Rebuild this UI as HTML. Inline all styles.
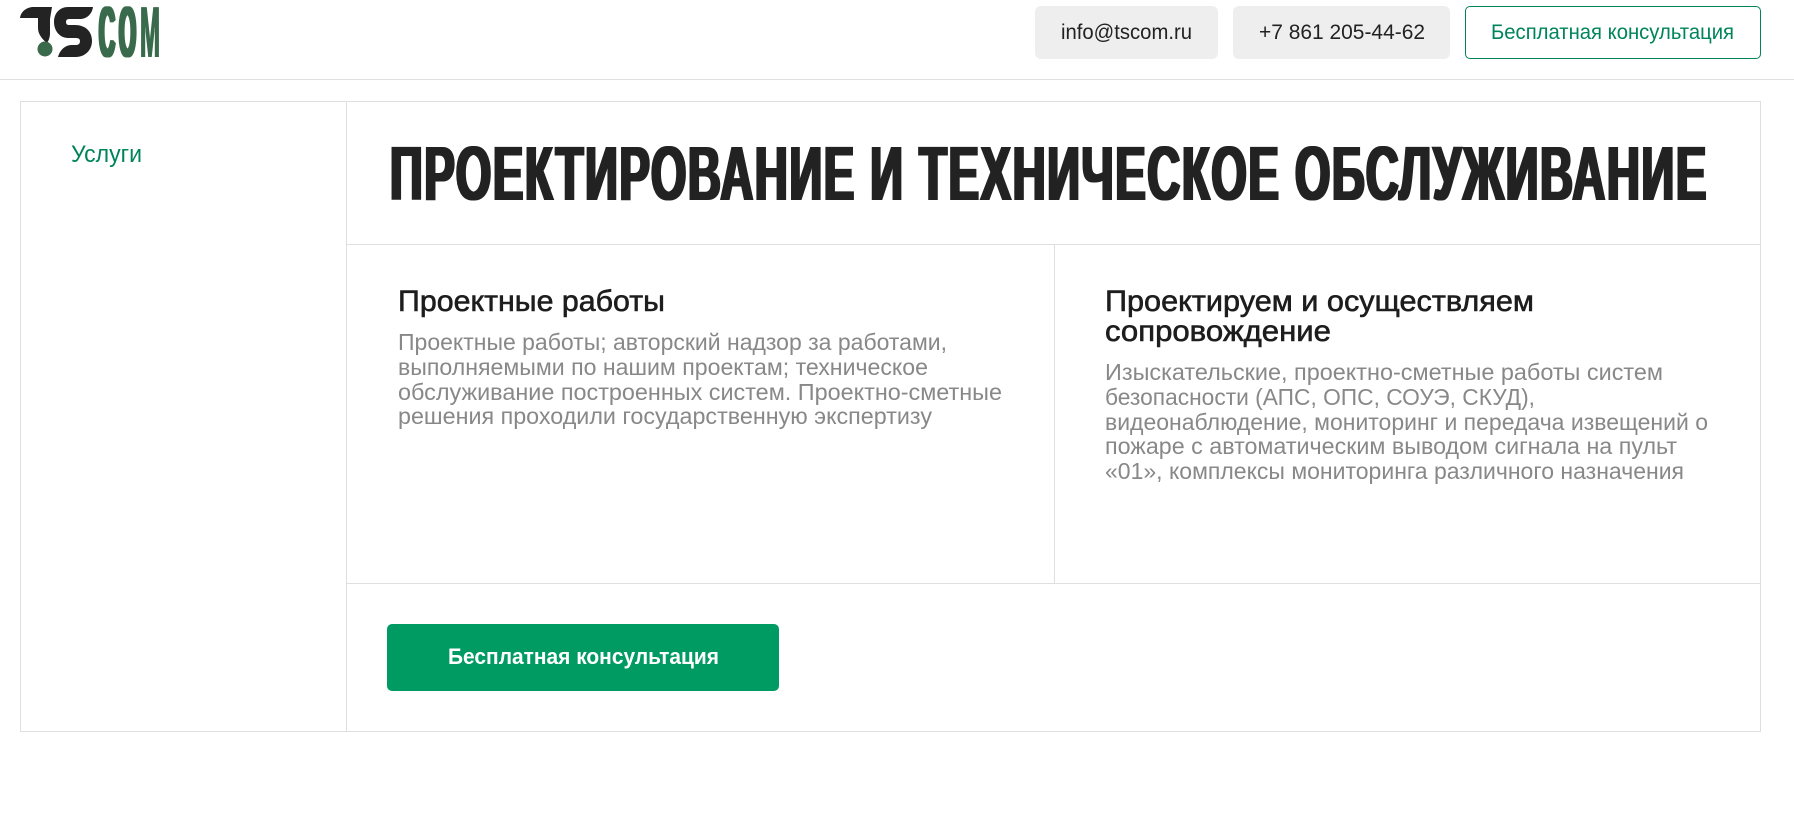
<!DOCTYPE html>
<html lang="ru">
<head>
<meta charset="utf-8">
<title>TSCOM</title>
<style>
html,body{margin:0;padding:0;background:#fff;width:1794px;height:826px;overflow:hidden}
body{position:relative;font-family:"Liberation Sans","Noto Sans CJK JP",sans-serif}
.a{position:absolute;box-sizing:border-box}
.l{position:absolute;background:#dfdfdf}
svg{position:absolute;left:0;top:0}
text{font-family:"Liberation Sans","Noto Sans CJK JP",sans-serif}
.t{font-size:21px;fill:#222}
.g{font-size:21px;fill:#00845a}
.h{font-size:30px;fill:#1d1d1d;stroke:#1d1d1d;stroke-width:.6px}
.b{font-size:23px;fill:#888}
</style>
</head>
<body>
<div class="l" style="left:0;top:79px;width:1794px;height:1px"></div>
<div class="a" style="left:1035px;top:6px;width:183px;height:53px;background:#eee;border-radius:6px"></div>
<div class="a" style="left:1233px;top:6px;width:217px;height:53px;background:#eee;border-radius:6px"></div>
<div class="a" style="left:1465px;top:6px;width:296px;height:53px;border:1px solid #00845a;border-radius:5px"></div>

<div class="a" style="left:20px;top:101px;width:1741px;height:631px;border:1px solid #dfdfdf"></div>
<div class="l" style="left:346px;top:101px;width:1px;height:631px"></div>
<div class="l" style="left:346px;top:244px;width:1415px;height:1px"></div>
<div class="l" style="left:1054px;top:244px;width:1px;height:340px"></div>
<div class="l" style="left:346px;top:583px;width:1415px;height:1px"></div>
<div class="a" style="left:387px;top:624px;width:392px;height:67px;background:#009b63;border-radius:5px"></div>

<svg width="1794" height="826" viewBox="0 0 1794 826" xmlns="http://www.w3.org/2000/svg">
  <defs>
    <filter id="d1" x="-2%" y="-10%" width="104%" height="120%"><feMorphology operator="dilate" radius="1.6 0"/></filter>
    <filter id="d2" x="-40%" y="-10%" width="180%" height="120%"><feMorphology operator="dilate" radius="1.5 0"/></filter>
    <filter id="d3" x="-40%" y="-10%" width="180%" height="120%"><feMorphology operator="dilate" radius=".6 0"/></filter>
  </defs>
  <path fill="#232323" d="M20 18C21 11 27 7 34 7H52L50 19V33C50 37 49 40 47 43C42 39 38 34 38 28V18H32C27 18 23 18 20 18Z"/>
  <circle cx="45" cy="49" r="7.500" fill="#386a4b"/>
  <path fill="#232323" d="M68 7H93C92 14 87 19 80 19H69Q66 19 66 22Q66 25 69 25H75C85 25 92 31 92 41C92 50 85 57 76 57H58C60 50 65 45 72 45H76Q80 45 80 41Q80 38 76 38H68C60 38 54 31 54 22C54 13 60 7 68 7Z"/>
  <g font-size="72" font-weight="700" fill="#386a4b">
    <text x="99" y="57" filter="url(#d2)" textLength="16" lengthAdjust="spacingAndGlyphs">C</text>
    <text x="119" y="57" filter="url(#d2)" textLength="17" lengthAdjust="spacingAndGlyphs">O</text>
    <text x="140" y="57" filter="url(#d3)" textLength="20" lengthAdjust="spacingAndGlyphs">M</text>
  </g>

  <text class="t" x="1061" y="39" textLength="131" lengthAdjust="spacingAndGlyphs">info@tscom.ru</text>
  <text class="t" x="1259" y="39" textLength="166" lengthAdjust="spacingAndGlyphs">+7 861 205-44-62</text>
  <text class="g" x="1491" y="39" textLength="243" lengthAdjust="spacingAndGlyphs">Бесплатная консультация</text>

  <text x="71" y="162" font-size="24" fill="#00845a" textLength="71" lengthAdjust="spacingAndGlyphs">Услуги</text>

  <text x="390" y="200" font-size="77" font-weight="700" fill="#232323" filter="url(#d1)" style="letter-spacing:3px" textLength="1318" lengthAdjust="spacingAndGlyphs">ПРОЕКТИРОВАНИЕ И ТЕХНИЧЕСКОЕ ОБСЛУЖИВАНИЕ</text>

  <text class="h" x="398" y="311" textLength="267" lengthAdjust="spacingAndGlyphs">Проектные работы</text>
  <text class="b" x="398" y="350" textLength="549" lengthAdjust="spacingAndGlyphs">Проектные работы; авторский надзор за работами,</text>
  <text class="b" x="398" y="375" textLength="530" lengthAdjust="spacingAndGlyphs">выполняемыми по нашим проектам; техническое</text>
  <text class="b" x="398" y="400" textLength="604" lengthAdjust="spacingAndGlyphs">обслуживание построенных систем. Проектно-сметные</text>
  <text class="b" x="398" y="424" textLength="534" lengthAdjust="spacingAndGlyphs">решения проходили государственную экспертизу</text>

  <text class="h" x="1105" y="311" textLength="429" lengthAdjust="spacingAndGlyphs">Проектируем и осуществляем</text>
  <text class="h" x="1105" y="341" textLength="226" lengthAdjust="spacingAndGlyphs">сопровождение</text>
  <text class="b" x="1105" y="380" textLength="558" lengthAdjust="spacingAndGlyphs">Изыскательские, проектно-сметные работы систем</text>
  <text class="b" x="1105" y="405" textLength="430" lengthAdjust="spacingAndGlyphs">безопасности (АПС, ОПС, СОУЭ, СКУД),</text>
  <text class="b" x="1105" y="430" textLength="603" lengthAdjust="spacingAndGlyphs">видеонаблюдение, мониторинг и передача извещений о</text>
  <text class="b" x="1105" y="454" textLength="572" lengthAdjust="spacingAndGlyphs">пожаре с автоматическим выводом сигнала на пульт</text>
  <text class="b" x="1105" y="479" textLength="579" lengthAdjust="spacingAndGlyphs">«01», комплексы мониторинга различного назначения</text>

  <text x="448" y="664" font-size="22" font-weight="700" fill="#fff" textLength="271" lengthAdjust="spacingAndGlyphs">Бесплатная консультация</text>
</svg>
</body>
</html>
